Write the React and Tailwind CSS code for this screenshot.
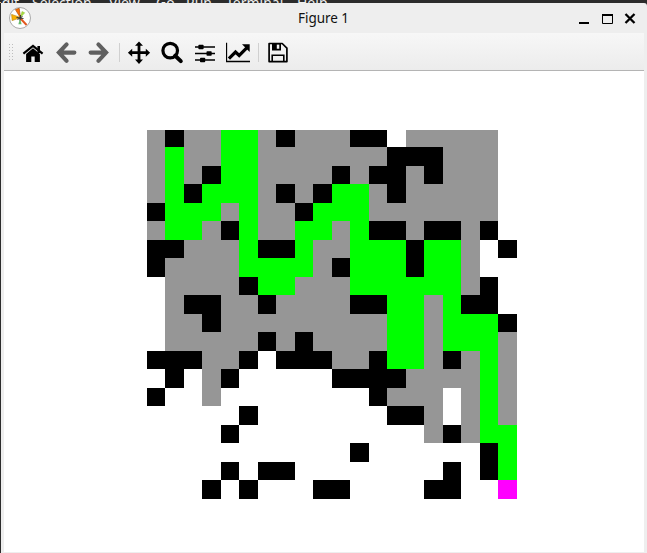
const MAP = [
  'gkgg++gkgggkk.ggggg.',
  'g+gg++gggggggkkkggg.',
  'g+gk++ggggkgkkgkggg.',
  'g+k+++gkgk++gkggggg.',
  'k+++g+ggk+++ggggggg.',
  'g++gk+gg++g+kkgkkgk.',
  'kkggg+kk+gg+++k++g.k',
  'kgggg++++gk+++k++g..',
  '.ggggk++ggg++++++gk.',
  '.gkkggkggggkk++g+kk.',
  '.ggkggggggggg++g+++k',
  '.gggggkgkgggg++g+++g',
  'kkkggk.kkkggk++gkg+g',
  '.k.gk.....kkkkgggg+g',
  'k..g........kggg.g+g',
  '.....k.......kkg.g+g',
  '....k..........gkg++',
  '...........k......k+',
  '....k.kk........k.k+',
  '...k.k...kk....kk..m',
];

const COLORS = {
  g: 'bg-[#969696]',
  k: 'bg-black',
  '+': 'bg-[#00ff00]',
  m: 'bg-[#ff00ff]',
  '.': 'bg-white',
};

const MENU = ['Edit', 'Selection', 'View', 'Go', 'Run', 'Terminal', 'Help'];

function Icon({ className = '', children }) {
  return (
    <svg viewBox="0 0 24 24" className={`h-6 w-6 shrink-0 ${className}`} fill="currentColor">
      {children}
    </svg>
  );
}

function Logo() {
  return (
    <svg viewBox="0 0 22 22" className="h-[22px] w-[22px] shrink-0">
      <circle cx="11" cy="11" r="10.5" fill="#fff" stroke="#aaa" />
      <path d="M11.5 11 6.4 2.6 10.2 1.3Z" fill="#ff6d00" stroke="#a8500c" strokeWidth=".7" />
      <path d="M11.5 10.5 3.2 13.6 2.6 7.4Z" fill="#f9b000" stroke="#c08a10" strokeWidth=".7" />
      <path d="M11 11 13 4.4 15.8 5.8Z" fill="#a5dc40" stroke="#8fb53c" strokeWidth=".4" />
      <path d="M11 11 9.4 17.2 12.6 17.2Z" fill="#66bb6a" />
      <path d="M11.5 11.5 17.6 18" stroke="#e2561c" strokeWidth="2" />
      <path d="M7.5 10.5 14.5 11.5M11.5 8 11 13.5M8.5 12.5 13.5 9.5" stroke="#333" strokeWidth="1" />
    </svg>
  );
}

function Toolbar() {
  return (
    <div className="flex h-[38px] shrink-0 items-center border-b border-[#b4b4b4] bg-linear-to-b from-[#f7f7f7] to-[#ececec] pt-[3px] text-black">
      <svg viewBox="0 0 5 18" className="mb-[2px] ml-[5px] h-[18px] w-[5px] shrink-0" fill="#bdbdbd">
        {[0, 3, 6, 9, 12, 15].map((y) => (
          <g key={y}>
            <rect x="0" y={y + 1} width="1" height="1" />
            <rect x="3" y={y + 1} width="1" height="1" />
          </g>
        ))}
      </svg>
      <Icon className="ml-[7px]">
        <path d="M12 7.2 18.9 13V21H13.7V15.5H10.3V21H5.1V13Z" />
        <path d="M16.4 5H19V12H16.4Z" />
        <path d="M2.4 12.7 12 4.9 21.6 12.7" fill="none" stroke="currentColor" strokeWidth="2.2" />
      </Icon>
      <Icon className="ml-[10px] text-[#606060]">
        <path d="M11.6 3.4 3.9 11.6 11.6 19.8M4.5 11.6H19.4" fill="none" stroke="currentColor" strokeWidth="4.1" strokeLinecap="round" />
      </Icon>
      <Icon className="ml-[8px] text-[#606060]">
        <path d="M11.4 3.4 19.1 11.6 11.4 19.8M3.6 11.6H18.5" fill="none" stroke="currentColor" strokeWidth="4.1" strokeLinecap="round" />
      </Icon>
      <div className="mb-[2px] ml-[8px] h-[19px] w-px shrink-0 bg-[#d0d0d0]" />
      <Icon className="ml-[7px]">
        <path d="M12 .4 16 4.8H13.4V10.2H18.8V7.7L23.1 11.7 18.8 15.7V13.1H13.4V18.6H16L12 23 8 18.6H10.6V13.1H5.2V15.7L.9 11.7 5.2 7.7V10.2H10.6V4.8H8Z" />
      </Icon>
      <Icon className="ml-[9px]">
        <circle cx="10.2" cy="9.6" r="7.3" fill="none" stroke="currentColor" strokeWidth="3.2" />
        <path d="M15.2 14.7 20.8 20.1" stroke="currentColor" strokeWidth="4" strokeLinecap="round" />
      </Icon>
      <Icon className="ml-[9px]">
        <path d="M2 6H22M2 12.5H22M2 19H22" stroke="currentColor" strokeWidth="1.5" />
        <rect x="5.4" y="3.7" width="5.2" height="4.6" rx=".8" />
        <rect x="13.5" y="10.2" width="5.2" height="4.6" rx=".8" />
        <rect x="7" y="16.7" width="5.2" height="4.6" rx=".8" />
      </Icon>
      <Icon className="ml-[9px]">
        <path d="M.5 1.7V20.5H24" fill="none" stroke="currentColor" strokeWidth="1.3" />
        <path d="M2.9 17.6 9.5 11 13.2 14.5 21 6.7" fill="none" stroke="currentColor" strokeWidth="3.2" />
        <path d="M16 3.2H23.7V10.9Z" />
      </Icon>
      <div className="mb-[2px] ml-[8px] h-[19px] w-px shrink-0 bg-[#d0d0d0]" />
      <Icon className="ml-[7px]">
        <path d="M3.1 2.5H16.2L20.9 7.2V20.6H3.1Z" fill="none" stroke="currentColor" strokeWidth="1.7" strokeLinejoin="round" />
        <path d="M6 2.3H15V9.4H6ZM10.8 3.5V7.8H13.3V3.5Z" fillRule="evenodd" />
        <path d="M6.2 20.7V14.2H17.8V20.7" fill="none" stroke="currentColor" strokeWidth="1.6" />
      </Icon>
    </div>
  );
}

export default function App() {
  return (
    <div className="flex h-[553px] w-[647px] flex-col overflow-hidden bg-[#2c2c2c]">
      <div className="flex h-[3px] shrink-0 items-end overflow-hidden font-['Noto_Sans',sans-serif] text-[14px] leading-none text-[#eeeeee]">
        <div className="-mb-[7px] -ml-[6px] grid h-[14px] shrink-0 grid-cols-[38px_77px_47px_30px_40px_71px_40px]">
          {MENU.map((m) => (
            <span key={m}>{m}</span>
          ))}
        </div>
      </div>
      <div className="ml-px flex min-h-0 flex-1 flex-col rounded-tr-[3px] bg-[#eeeeee]">
        <div className="flex h-[30px] shrink-0 items-center pr-[11px] pl-2">
          <Logo />
          <div className="flex-1 pl-[38px] text-center font-['Noto_Sans',sans-serif] text-[13.5px] tracking-[-0.05px] text-[#111]">
            Figure 1
          </div>
          <svg viewBox="0 0 58 14" className="h-[14px] w-[58px] shrink-0" fill="none" stroke="#000">
            <path d="M1 12H11" strokeWidth="2" />
            <path d="M24.5 4V12.5H34.5V4" />
            <path d="M24 4H35" strokeWidth="2" />
            <path d="M47.5 3 56.5 12M56.5 3 47.5 12" strokeWidth="2.3" />
          </svg>
        </div>
        <div className="mr-[3px] mb-px ml-[3px] flex min-h-0 flex-1 flex-col bg-white">
          <Toolbar />
          <div className="pt-[59px] pl-[143px]">
            <div className="grid w-[370px] grid-cols-[repeat(10,18px_19px)] grid-rows-[17px_19px_repeat(9,18px_19px)]">
              {MAP.flatMap((row, r) =>
                row.split('').map((c, i) => <div key={`${r}-${i}`} className={COLORS[c]} />)
              )}
            </div>
          </div>
        </div>
      </div>
    </div>
  );
}
